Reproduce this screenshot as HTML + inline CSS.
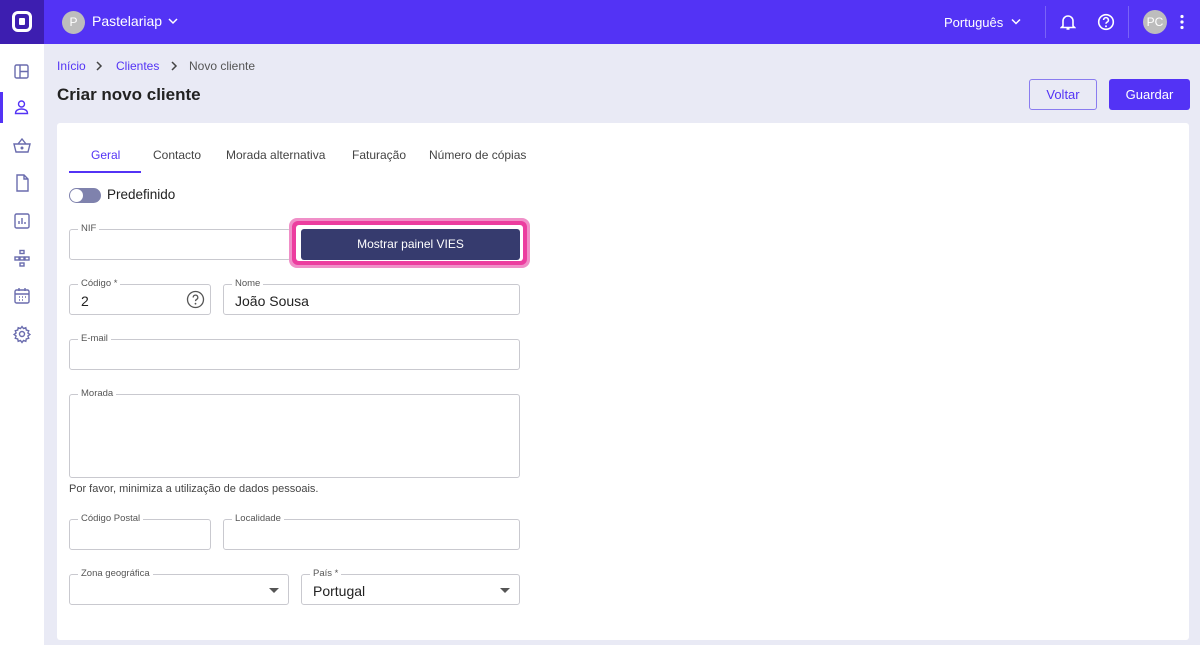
<!DOCTYPE html>
<html><head><meta charset="utf-8"><style>
*{box-sizing:border-box;margin:0;padding:0}
body{width:1200px;height:645px;overflow:hidden;background:#e9eaf5;font-family:"Liberation Sans","DejaVu Sans",sans-serif;color:#222;position:relative}
.top{position:absolute;left:0;top:0;width:1200px;height:44px;background:#5333f5}
.logo{position:absolute;left:0;top:0;width:44px;height:44px;background:#3d1eb0}
.side{position:absolute;left:0;top:44px;width:44px;height:601px;background:#fff}
.ab{position:absolute}
.t{position:absolute;white-space:nowrap}
.card{position:absolute;left:57px;top:123px;width:1132px;height:517px;background:#fff;border-radius:3px}
.f{position:absolute;border:1px solid #c9c9cf;border-radius:3px;background:#fff}
.f .l{position:absolute;top:-7px;left:8px;font-size:9.5px;color:#555;background:#fff;padding:0 3px;line-height:12px}
.f .v{position:absolute;left:11px;top:8px;font-size:14px;color:#222}
.ic{stroke:#6a6cae;fill:none;stroke-width:1.4}
.tab{position:absolute;top:148px;font-size:12px;color:#444;white-space:nowrap}
</style></head><body>
<div class="top"></div>
<div class="logo"><svg width="44" height="44"><rect x="13.5" y="12.5" width="17" height="18" rx="4.5" fill="none" stroke="#fff" stroke-width="3"/><rect x="19" y="18" width="6" height="7" rx="1" fill="#fff"/></svg></div>
<div class="ab" style="left:62px;top:11px;width:23px;height:23px;border-radius:50%;background:#bdbdbd;color:#fff;font-size:12px;text-align:center;line-height:23px">P</div>
<div class="t" style="left:92px;top:13px;color:#fff;font-size:14px">Pastelariap</div>
<svg class="ab" style="left:168px;top:17px" width="10" height="8"><path d="M1 2l4 4 4-4" stroke="#fff" fill="none" stroke-width="1.5"/></svg>
<div class="t" style="left:944px;top:15px;color:#fff;font-size:13px">Português</div>
<svg class="ab" style="left:1011px;top:18px" width="10" height="8"><path d="M1 1.5l4 4 4-4" stroke="#fff" fill="none" stroke-width="1.5"/></svg>
<div class="ab" style="left:1045px;top:6px;width:1px;height:32px;background:#7a63f7"></div>
<div class="ab" style="left:1128px;top:6px;width:1px;height:32px;background:#7a63f7"></div>
<svg class="ab" style="left:1060px;top:13px" width="16" height="18"><path d="M3 13V8a5 5 0 0 1 10 0v5l1.5 1.5h-13z M6.5 16h3" stroke="#fff" fill="none" stroke-width="1.6"/></svg>
<svg class="ab" style="left:1097px;top:13px" width="18" height="18"><circle cx="9" cy="9" r="7.3" stroke="#fff" fill="none" stroke-width="1.6"/><path d="M6.6 7a2.4 2.4 0 1 1 3.4 2.2c-.7.4-1 .8-1 1.6" stroke="#fff" fill="none" stroke-width="1.6"/><circle cx="9" cy="13.3" r="1" fill="#fff"/></svg>
<div class="ab" style="left:1143px;top:10px;width:24px;height:24px;border-radius:50%;background:#bdbdbd;color:#fff;font-size:12px;text-align:center;line-height:24px">PC</div>
<svg class="ab" style="left:1179px;top:14px" width="6" height="16"><circle cx="3" cy="2.5" r="1.6" fill="#fff"/><circle cx="3" cy="8" r="1.6" fill="#fff"/><circle cx="3" cy="13.5" r="1.6" fill="#fff"/></svg>

<div class="side"></div>
<div class="ab" style="left:0;top:92px;width:3px;height:31px;background:#5333f5"></div>
<svg class="ab" style="left:12px;top:62px" width="20" height="300">
<g class="ic"><rect x="3" y="3" width="13" height="13" rx="1.5"/><path d="M8 3v13M8 9.5h8"/></g>
<g class="ic" style="stroke:#5333f5" transform="translate(0,36)"><circle cx="9.5" cy="6" r="3"/><path d="M3.5 15.5c0-3 2.5-4.5 6-4.5s6 1.5 6 4.5z"/></g>
<g class="ic" transform="translate(0,74)"><path d="M2 8h16l-2 8H4z M6 8l4-5 4 5"/><circle cx="10" cy="12" r=".8"/></g>
<g class="ic" transform="translate(0,111)"><path d="M5 2h7l4 4v12H5z M12 2v4h4"/></g>
<g class="ic" transform="translate(0,149)"><rect x="3" y="3" width="14" height="14" rx="1.5"/><path d="M7 13v-3M10 13V7M13 13v-2"/></g>
<g class="ic" transform="translate(0,187)"><rect x="8" y="1.5" width="4" height="3"/><rect x="3" y="8" width="4" height="3"/><rect x="8" y="8" width="4" height="3"/><rect x="13" y="8" width="4" height="3"/><rect x="8" y="14" width="4" height="3"/></g>
<g class="ic" transform="translate(0,224)"><rect x="3" y="4" width="14" height="13" rx="1.5"/><path d="M3 8h14M7 2v3M13 2v3M7 11h1M10 11h1M13 11h1M7 14h1M10 14h1"/></g>
<g class="ic" transform="translate(0,262)"><circle cx="10" cy="10" r="2.5"/><path d="M10 2.5l1.5 2 2.3-.8.5 2.4 2.4.6-.8 2.3 2 1.5-2 1.5.8 2.3-2.4.6-.5 2.4-2.3-.8-1.5 2-1.5-2-2.3.8-.5-2.4-2.4-.6.8-2.3-2-1.5 2-1.5-.8-2.3 2.4-.6.5-2.4 2.3.8z"/></g>
</svg>

<div class="t" style="left:57px;top:59px;font-size:12px;color:#5333f5">Início</div>
<svg class="ab" style="left:95px;top:61px" width="8" height="10"><path d="M2 1l4 4-4 4" stroke="#444" fill="none" stroke-width="1.5"/></svg>
<div class="t" style="left:116px;top:59px;font-size:12px;color:#5333f5">Clientes</div>
<svg class="ab" style="left:170px;top:61px" width="8" height="10"><path d="M2 1l4 4-4 4" stroke="#444" fill="none" stroke-width="1.5"/></svg>
<div class="t" style="left:189px;top:59px;font-size:12px;color:#555">Novo cliente</div>
<div class="t" style="left:57px;top:85px;font-size:17px;font-weight:bold;color:#222">Criar novo cliente</div>
<div class="ab" style="left:1029px;top:79px;width:68px;height:31px;border:1px solid #8a7cf0;border-radius:3px;color:#5333f5;font-size:13px;text-align:center;line-height:29px">Voltar</div>
<div class="ab" style="left:1109px;top:79px;width:81px;height:31px;background:#5333f5;border-radius:3px;color:#fff;font-size:13px;text-align:center;line-height:31px">Guardar</div>

<div class="card"></div>
<div class="tab" style="left:91px;color:#5333f5">Geral</div>
<div class="tab" style="left:153px">Contacto</div>
<div class="tab" style="left:226px">Morada alternativa</div>
<div class="tab" style="left:352px">Faturação</div>
<div class="tab" style="left:429px">Número de cópias</div>
<div class="ab" style="left:69px;top:171px;width:72px;height:2px;background:#5333f5"></div>
<div class="ab" style="left:69px;top:188px;width:32px;height:15px;border-radius:8px;background:#7f82ad"></div>
<div class="ab" style="left:70px;top:189px;width:13px;height:13px;border-radius:50%;background:#fff"></div>
<div class="t" style="left:107px;top:187px;font-size:13.5px;color:#222">Predefinido</div>

<div class="f" style="left:69px;top:229px;width:222px;height:31px"><span class="l">NIF</span></div>
<div class="ab" style="left:289px;top:218px;width:241px;height:50px;border-radius:8px;background:#f08fc8"></div>
<div class="ab" style="left:292px;top:221px;width:235px;height:44px;border-radius:6px;background:#ec3d9f"></div>
<div class="ab" style="left:296px;top:225px;width:227px;height:36px;border-radius:3px;background:#fff"></div>
<div class="ab" style="left:301px;top:229px;width:219px;height:31px;background:#363b6e;border-radius:3px;color:#fff;font-size:12px;text-align:center;line-height:31px">Mostrar painel VIES</div>

<div class="f" style="left:69px;top:284px;width:142px;height:31px"><span class="l">Código *</span><span class="v">2</span>
<svg class="ab" style="left:116px;top:5px" width="19" height="19"><circle cx="9.5" cy="9.5" r="8" stroke="#555" fill="none" stroke-width="1.3"/><path d="M7.2 7.5a2.3 2.3 0 1 1 3.3 2c-.7.4-1 .8-1 1.6" stroke="#555" fill="none" stroke-width="1.3"/><circle cx="9.5" cy="13.7" r=".9" fill="#555"/></svg></div>
<div class="f" style="left:223px;top:284px;width:297px;height:31px"><span class="l">Nome</span><span class="v">João Sousa</span></div>
<div class="f" style="left:69px;top:339px;width:451px;height:31px"><span class="l">E-mail</span></div>
<div class="f" style="left:69px;top:394px;width:451px;height:84px"><span class="l">Morada</span></div>
<div class="t" style="left:69px;top:483px;font-size:11px;color:#444">Por favor, minimiza a utilização de dados pessoais.</div>
<div class="f" style="left:69px;top:519px;width:142px;height:31px"><span class="l">Código Postal</span></div>
<div class="f" style="left:223px;top:519px;width:297px;height:31px"><span class="l">Localidade</span></div>
<div class="f" style="left:69px;top:574px;width:220px;height:31px"><span class="l">Zona geográfica</span>
<svg class="ab" style="left:199px;top:13px" width="10" height="6"><path d="M0 0h10L5 5z" fill="#555"/></svg></div>
<div class="f" style="left:301px;top:574px;width:219px;height:31px"><span class="l">País *</span><span class="v">Portugal</span>
<svg class="ab" style="left:198px;top:13px" width="10" height="6"><path d="M0 0h10L5 5z" fill="#555"/></svg></div>
</body></html>
